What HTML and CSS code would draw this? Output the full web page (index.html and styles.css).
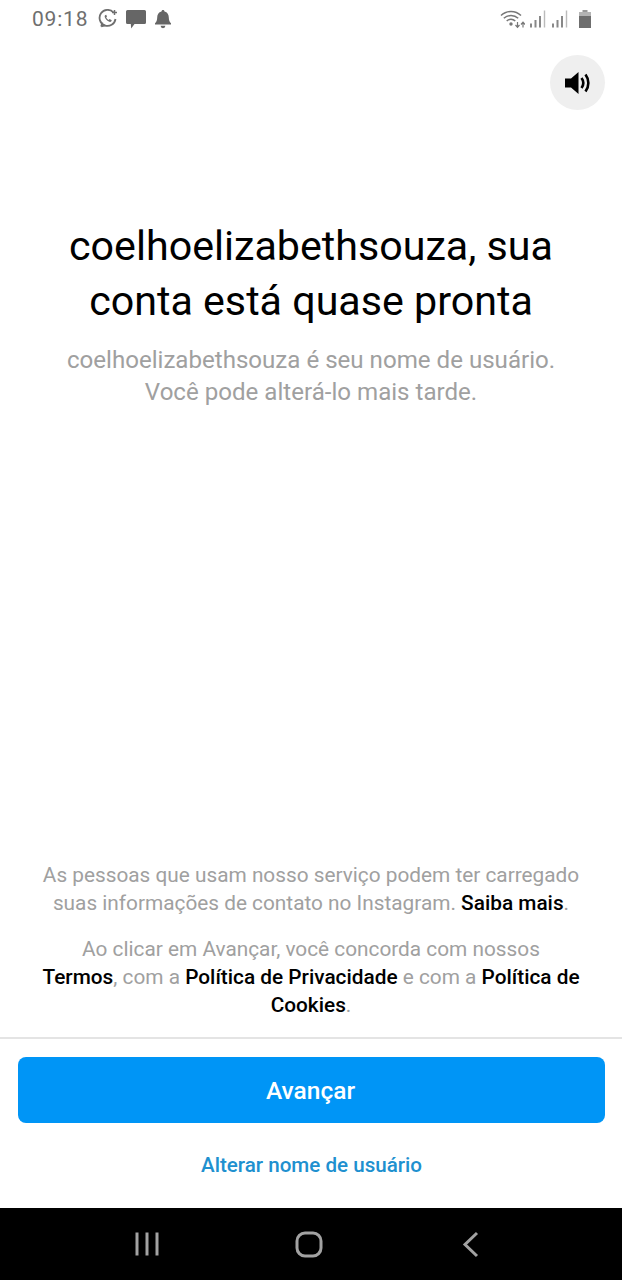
FILE: index.html
```html
<!DOCTYPE html>
<html lang="pt-BR">
<head>
<meta charset="utf-8">
<title>Instagram</title>
<link rel="stylesheet" href="styles.css">
</head>
<body>
<div class="screen">
  <header class="status">
    <div class="status-left">
      <span class="clock">09:18</span>
      <svg class="ic" width="20" height="20" viewBox="0 0 20 20"><path d="M15.500 3.500A8 8 0 1 0 17.500 10" fill="none" stroke="#6f6f6f" stroke-width="1.800"/><path d="M3.200 17.500l1.200-4M3.200 17.500l4-1.100" stroke="#6f6f6f" stroke-width="1.800" fill="none"/><path d="M7 6.200c-1 1 .2 3.400 1.600 4.800s3.400 2.400 4.600 1.600l.6-1.300-2.200-1.200-1 .8c-1-.5-1.800-1.400-2.400-2.500l.8-.9L8.200 5.800z" fill="#6f6f6f"/><path d="M16.500 1v5M14 3.500h5" stroke="#6f6f6f" stroke-width="1.500"/></svg>
      <svg class="ic" width="20" height="20" viewBox="0 0 20 20"><path d="M0 2.500Q0 1 1.500 1h17Q20 1 20 2.500v11q0 1.500-1.500 1.500H8.500L5.200 19.500 4.800 15H1.500Q0 15 0 13.500z" fill="#666"/></svg>
      <svg class="ic bell" width="18" height="20" viewBox="0 0 18 20"><path d="M9 1c.9 0 1.500.6 1.500 1.500 3 .7 4.300 3.200 4.300 6 0 2.800.8 4.300 2.200 5.800v1.300H1v-1.300C2.400 12.800 3.200 11.300 3.200 8.500c0-2.800 1.300-5.300 4.300-6C7.500 1.600 8.100 1 9 1zM6.600 16.800h4.800a2.400 2.400 0 0 1-4.800 0z" fill="#666"/></svg>
    </div>
    <div class="status-right">
      <svg width="25" height="20" viewBox="0 0 25 20"><path d="M1 6.500C6.500 1 15.500 1 21 6.500M3.800 9.300C7.800 5.600 14.200 5.600 18.200 9.300M6.700 12c2.500-2.200 6.100-2.200 8.600 0" fill="none" stroke="#777" stroke-width="1.500"/><circle cx="11" cy="15" r="1.700" fill="#777"/><path d="M17.500 13v5M15.500 16l2 2.300 2-2.300M23 18.500v-5M21 15.500l2-2.300 2 2.300" fill="none" stroke="#777" stroke-width="1.200"/></svg>
      <svg width="19" height="20" viewBox="0 0 19 20"><path d="M2 14.500h2v4H2zM6.500 11h2v7.500h-2zM11 7h2v11.500h-2z" fill="#888"/><path d="M16.500 1.500v17" stroke="#bbb" stroke-width="1.400"/></svg>
      <svg class="signal-two" width="19" height="20" viewBox="0 0 19 20"><path d="M2 14.500h2v4H2zM6.500 11h2v7.500h-2zM11 7h2v11.500h-2z" fill="#888"/><path d="M16.500 1.500v17" stroke="#bbb" stroke-width="1.400"/></svg>
      <svg class="battery" width="14" height="20" viewBox="0 0 14 20"><path d="M4.500 1h5v2h-5z" fill="#999"/><path d="M1 3h12v16H1z" fill="#b4b4b4"/><path d="M1 7h12v12H1z" fill="#6e6e6e"/></svg>
    </div>
  </header>

  <div class="sound-row">
    <button class="sound" type="button" aria-label="Som">
      <svg width="28" height="28" viewBox="0 0 28 28"><path d="M1 9.500h6L14.500 3v22L7 18.500H1z" fill="#000"/><path d="M17.500 9c2.200 3 2.200 7 0 10M21.500 5.500c3.800 5 3.800 12 0 17" fill="none" stroke="#000" stroke-width="2.600"/></svg>
    </button>
  </div>

  <main class="intro">
    <h1 class="title">coelhoelizabethsouza, sua conta está quase pronta</h1>
    <p class="sub">coelhoelizabethsouza é seu nome de usuário.<br>Você pode alterá-lo mais tarde.</p>
  </main>

  <section class="legal">
    <p>As pessoas que usam nosso serviço podem ter carregado suas informações de contato no Instagram. <b>Saiba mais</b>.</p>
    <p>Ao clicar em Avançar, você concorda com nossos<br><b>Termos</b>, com a <b>Política de Privacidade</b> e com a <b>Política de Cookies</b>.</p>
  </section>

  <footer class="actions">
    <button class="next" type="button">Avançar</button>
    <a class="change" href="#">Alterar nome de usuário</a>
  </footer>

  <nav class="navbar">
    <svg width="26" height="26" viewBox="0 0 26 26"><path d="M3 1.500v23M13 1.500v23M23 1.500v23" stroke="#a2a2a2" stroke-width="3"/></svg>
    <svg width="28" height="28" viewBox="0 0 28 28"><rect x="2" y="3" width="24" height="23" rx="8" fill="none" stroke="#a2a2a2" stroke-width="3"/></svg>
    <svg class="nav-back" width="18" height="28" viewBox="0 0 18 28"><path d="M15 3L3 14.500 15 26" fill="none" stroke="#a2a2a2" stroke-width="3"/></svg>
  </nav>
</div>
</body>
</html>
```

FILE: styles.css
```css
* { box-sizing: border-box; }
html, body { margin: 0; padding: 0; }
body { background: #fff; font-family: Roboto, "Liberation Sans", sans-serif; }

.screen {
  width: 622px;
  height: 1280px;
  display: flex;
  flex-direction: column;
  overflow: hidden;
  background: #fff;
}

.status {
  height: 38px;
  flex: none;
  display: flex;
  justify-content: space-between;
  align-items: center;
  padding: 0 30px 0 32px;
}
.status-left { display: flex; align-items: center; gap: 8px; }
.status-right { display: flex; align-items: center; gap: 3px; }
.clock { font-size: 21px; color: #6f6f6f; letter-spacing: .8px; margin-right: 2px; }
.battery { margin-left: 6px; }

.sound-row {
  flex: none;
  display: flex;
  justify-content: flex-end;
  padding: 17px 17px 0 0;
}
.sound {
  width: 55px;
  height: 55px;
  border: 0;
  padding: 0;
  border-radius: 50%;
  background: #efefef;
  display: flex;
  align-items: center;
  justify-content: center;
}

.intro { flex: 1; padding: 0 40px; text-align: center; margin-top: 109px; }
.title {
  margin: 0;
  font-size: 41.200px;
  line-height: 55px;
  font-weight: 400;
  color: #000;
}
.sub {
  margin: 16px -20px 0;
  font-size: 24.100px;
  line-height: 31.500px;
  color: #a0a0a0;
}

.legal {
  flex: none;
  padding: 0 36px 18px;
  text-align: center;
  font-size: 20.800px;
  line-height: 28px;
  color: #a0a0a0;
  border-bottom: 2px solid #e4e4e4;
}
.legal p { margin: 0 0 18px; }
.legal p:last-child { margin: 0; }
.legal b { font-weight: 500; color: #000; }

.actions {
  flex: none;
  height: 169px;
  padding: 18px 17px 0 18px;
  display: flex;
  flex-direction: column;
  align-items: center;
}
.next {
  width: 100%;
  height: 66px;
  flex: none;
  border: 0;
  padding: 0 2px 0 0;
  border-radius: 8px;
  background: #0095f6;
  color: #fff;
  font: 500 24.500px Roboto, "Liberation Sans", sans-serif;
}
.change {
  margin-top: 28px;
  font-size: 20.600px;
  font-weight: 500;
  line-height: 28px;
  color: #2090cf;
  text-decoration: none;
}

.navbar {
  height: 72px;
  flex: none;
  background: #000;
  display: flex;
  align-items: center;
  gap: 135px;
  padding: 0 0 0 134px;
}
.nav-back { margin-left: 4px; }
```
